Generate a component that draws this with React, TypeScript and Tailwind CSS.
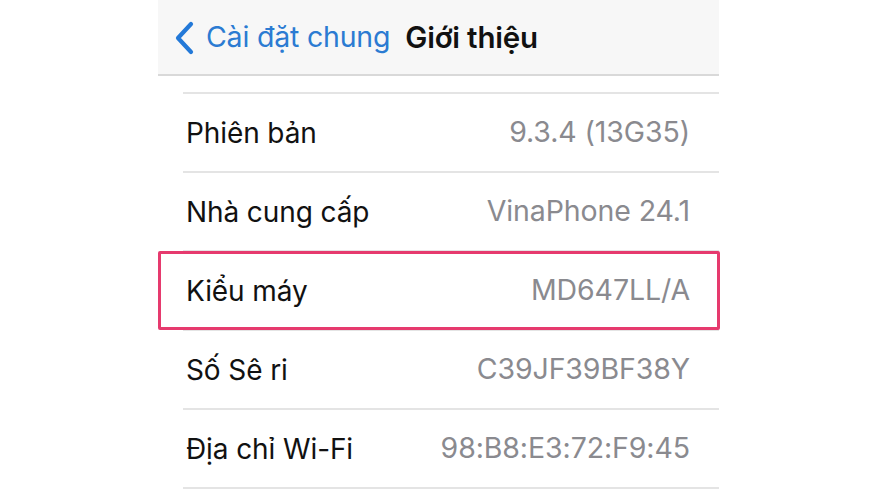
import React from "react";

const rows = [
  { label: "Phiên bản", value: "9.3.4 (13G35)" },
  { label: "Nhà cung cấp", value: "VinaPhone 24.1" },
  { label: "Kiểu máy", value: "MD647LL/A", highlight: true },
  { label: "Số Sê ri", value: "C39JF39BF38Y" },
  { label: "Địa chỉ Wi-Fi", value: "98:B8:E3:72:F9:45" },
];

export default function App() {
  return (
    <div
      className="w-[880px] h-[495px] bg-white overflow-hidden"
      style={{ fontFamily: "Inter, 'Noto Sans', sans-serif" }}
    >
      <div className="ml-[158px] w-[561px] h-full bg-white">
        <div className="h-[76px] bg-[#f7f7f7] border-b-2 border-[#d9d9d9] flex items-center pl-[15px]">
          <svg width="22" height="34" viewBox="0 0 22 34" className="mr-[11px] mt-[1px]">
            <path d="M18 3 L5 17 L18 31" fill="none" stroke="#2379d8" strokeWidth="4.2" strokeLinecap="round" strokeLinejoin="round" />
          </svg>
          <span className="text-[28.5px] text-[#2b7bd2] tracking-[-0.2px]">Cài đặt chung</span>
          <span className="ml-[15px] text-[29.5px] font-semibold text-[#111] tracking-[-0.2px]">Giới thiệu</span>
        </div>
        <div className="pt-[16px] pl-[25px]">
          <div className="border-t-2 border-[#e4e4e4]">
            {rows.map((r) => (
              <div
                key={r.label}
                className="relative h-[79px] border-b-2 border-[#e4e4e4] flex items-center justify-between pr-[29px] pl-[3px]"
              >
                <span className="text-[28px] text-[#111] tracking-[-0.1px]">{r.label}</span>
                <span className="text-[28.5px] text-[#8a8a8f] tracking-[-0.1px]">{r.value}</span>
                {r.highlight && (
                  <div className="absolute left-[-25px] right-[-1px] top-[-1px] bottom-[-1px] border-[3px] border-[#e63a6e] rounded-[2px]" />
                )}
              </div>
            ))}
          </div>
        </div>
      </div>
    </div>
  );
}
